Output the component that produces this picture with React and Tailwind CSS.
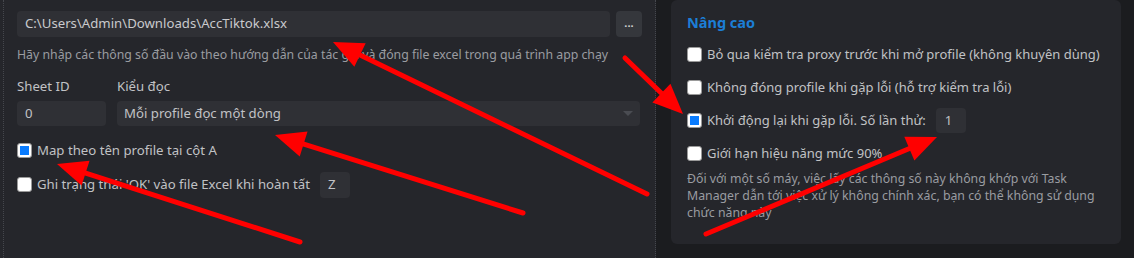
import React from "react";

const font = { fontFamily: '"Noto Sans", "Open Sans", sans-serif' };

// arrow annotations: [fromX, fromY, tipX, tipY]
const arrows = [
  [647, 194, 333, 42],
  [523, 213, 275, 135],
  [300, 242, 57, 164],
  [625, 58, 683, 114],
  [706, 234, 937, 137],
];

const Arrow = ({ a }) => {
  const [x1, y1, x2, y2] = a;
  const dx = x2 - x1;
  const dy = y2 - y1;
  const len = Math.hypot(dx, dy);
  const ux = dx / len;
  const uy = dy / len;
  const head = 30;
  const half = 13;
  const bx = x2 - ux * head;
  const by = y2 - uy * head;
  const pts = `${x2},${y2} ${bx - uy * half},${by + ux * half} ${bx + uy * half},${by - ux * half}`;
  return (
    <g>
      <line
        x1={x1}
        y1={y1}
        x2={bx + ux * 4}
        y2={by + uy * 4}
        stroke="#ff0000"
        strokeWidth="5"
        strokeLinecap="round"
      />
      <polygon points={pts} fill="#ff0000" />
    </g>
  );
};

const Checkbox = ({ checked }) => (
  <span className="w-[15px] h-[15px] shrink-0 rounded-[3px] bg-white border border-[#9a9a9a] flex items-center justify-center">
    {checked && <span className="w-[9px] h-[9px] bg-[#0a7cff]" />}
  </span>
);

const App = () => {
  return (
    <div
      className="relative w-[1134px] h-[258px] overflow-hidden bg-[#1b1c1f] flex text-[#c1c2c5]"
      style={font}
    >
      {/* Left settings panel */}
      <div className="w-[656px] h-full bg-[#25262b] pl-[3px]">
        <div className="h-full border-x border-dotted border-[#45474d] px-[13px] pt-[11px]">
          <div className="flex gap-[6px]">
            <div className="flex-1 h-[26px] rounded-[4px] bg-[#2f3035] flex items-center px-[8px] text-[13.2px] text-[#c9cacd]">
              C:\Users\Admin\Downloads\AccTiktok.xlsx
            </div>
            <button className="w-[26px] h-[26px] rounded-[4px] bg-[#35373c] text-[#d0d0d0] text-[11px] font-bold leading-none pb-[4px]">
              ...
            </button>
          </div>
          <p className="mt-[9px] text-[12.3px] text-[#9a9ca1] leading-[18px]">
            Hãy nhập các thông số đầu vào theo hướng dẫn của tác giả và đóng file excel trong quá trình app chạy
          </p>

          <div className="flex gap-[11px] mt-[12px] pr-[2px]">
            <div className="w-[89px]">
              <div className="text-[13.2px] leading-[20px]">Sheet ID</div>
              <div className="mt-[5px] h-[25px] rounded-[4px] bg-[#2f3035] flex items-center px-[8px] text-[13.2px]">
                0
              </div>
            </div>
            <div className="flex-1">
              <div className="text-[13.2px] leading-[20px]">Kiểu đọc</div>
              <div className="mt-[5px] h-[25px] rounded-[4px] bg-[#2f3035] flex items-center justify-between px-[7px] text-[13.2px]">
                <span>Mỗi profile đọc một dòng</span>
                <span className="w-0 h-0 border-x-[5px] border-x-transparent border-t-[5px] border-t-[#4a4c52]" />
              </div>
            </div>
          </div>

          <label className="flex items-center gap-[5px] mt-[14px] text-[13.2px] leading-[20px]">
            <Checkbox checked />
            Map theo tên profile tại cột A
          </label>
          <div className="flex items-center mt-[12px] text-[13.2px]">
            <label className="flex items-center gap-[5px]">
              <Checkbox />
              Ghi trạng thái 'OK' vào file Excel khi hoàn tất
            </label>
            <div className="ml-[10px] w-[30px] h-[26px] rounded-[4px] bg-[#2f3035] flex items-center px-[8px]">
              Z
            </div>
          </div>
        </div>
      </div>

      {/* Advanced card */}
      <div className="ml-[15px] w-[450px] h-[244px] rounded-[6px] bg-[#25262b] px-[16px] pt-[12px]">
        <h3 className="text-[14.5px] font-bold text-[#1c7ed6] leading-[20px]">Nâng cao</h3>
        <div className="flex flex-col gap-[13px] mt-[12px] text-[13px] leading-[20px] whitespace-nowrap">
          <label className="h-[20px] flex items-center gap-[5px]">
            <Checkbox />
            Bỏ qua kiểm tra proxy trước khi mở profile (không khuyên dùng)
          </label>
          <label className="h-[20px] flex items-center gap-[5px]">
            <Checkbox />
            Không đóng profile khi gặp lỗi (hỗ trợ kiểm tra lỗi)
          </label>
          <div className="h-[20px] flex items-center">
            <label className="flex items-center gap-[5px]">
              <Checkbox checked />
              Khởi động lại khi gặp lỗi. Số lần thử:
            </label>
            <div className="ml-[10px] w-[30px] h-[25px] shrink-0 rounded-[4px] bg-[#2f3035] flex items-center px-[9px]">
              1
            </div>
          </div>
          <label className="h-[20px] flex items-center gap-[5px]">
            <Checkbox />
            Giới hạn hiệu năng mức 90%
          </label>
        </div>
        <p className="mt-[7px] text-[12.3px] leading-[17px] text-[#9a9ca1] pr-[6px]">
          Đối với một số máy, việc lấy các thông số này không khớp với Task Manager dẫn tới việc xử lý không chính xác, bạn có thể không sử dụng chức năng này
        </p>
      </div>

      {/* red annotation arrows */}
      <svg className="absolute inset-0 pointer-events-none" width="1134" height="258">
        {arrows.map((a, i) => (
          <Arrow key={i} a={a} />
        ))}
      </svg>
    </div>
  );
};

export default App;
